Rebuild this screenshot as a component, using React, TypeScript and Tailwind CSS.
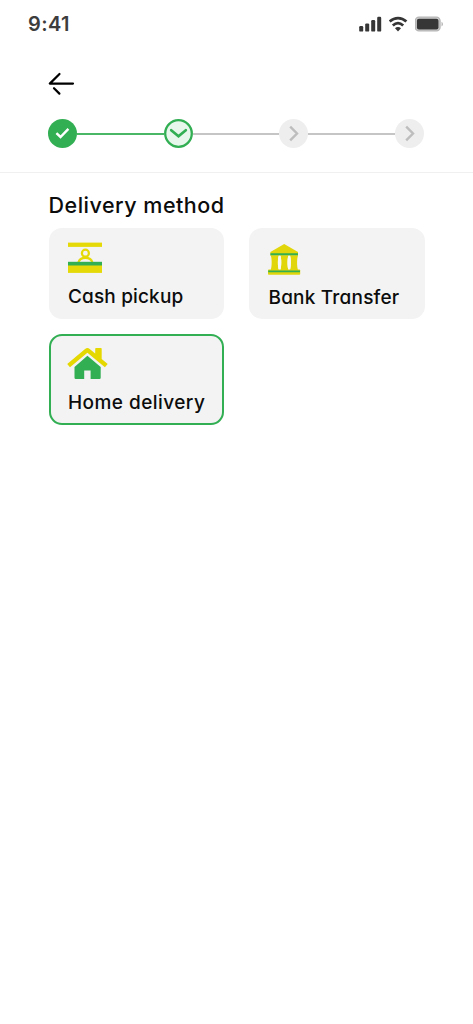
import React from 'react';
import clsx from 'clsx';

const StatusBar: React.FC = () => (
  <div className="flex h-12 items-center justify-between pl-7 pr-[29px]">
    <span className="font-['Inter',sans-serif] text-[20px] font-semibold leading-6 tracking-[0.4px] text-[#3d3d3d]">
      9:41
    </span>
    <div className="flex items-center gap-[7px]">
      <svg width="23" height="16" viewBox="0 0 23 16" fill="#363636">
        <rect x="0.2" y="10" width="4" height="5.6" rx="1.2" />
        <rect x="6.2" y="7.4" width="4" height="8.2" rx="1.2" />
        <rect x="12.2" y="4" width="4" height="11.6" rx="1.2" />
        <rect x="18.2" y="0.8" width="4" height="14.8" rx="1.2" />
      </svg>
      <svg width="19" height="16" viewBox="0 0 19 16" fill="none" stroke="#363636" strokeWidth="2.8">
        <path d="M0.6 5.5C5.6 0.9 12.4 0.9 17.4 5.5" />
        <path d="M3.8 9.5C7 6.6 11 6.6 14.2 9.5" />
        <path d="M6 12.3C7.6 10.7 10.4 10.7 12 12.3L9 15.4Z" fill="#363636" stroke="none" />
      </svg>
      <svg width="29" height="16" viewBox="0 0 29 16">
        <rect x="0.4" y="1.1" width="24.6" height="13.8" rx="3.6" fill="#d0d0d0" stroke="#b5b5b5" strokeWidth="1.4" />
        <rect x="1.9" y="2.8" width="21.6" height="10.6" rx="2" fill="#363636" />
        <path d="M26.5 5.8V10.6C28.5 9.5 28.5 6.9 26.5 5.8Z" fill="#b5b5b5" />
      </svg>
    </div>
  </div>
);

const CashIcon: React.FC = () => (
  <svg width="34" height="32" viewBox="0 0 34 32" className="block">
    <rect y="0.6" width="34" height="4.3" fill="#e5da08" />
    <g fill="none" stroke="#e5da08" strokeWidth="2.2">
      <circle cx="17.4" cy="11.2" r="3.5" />
      <path d="M10.4 20.6C12 14.4 22.8 14.4 24.4 20.6" />
    </g>
    <rect y="23" width="34" height="7.9" fill="#e5da08" />
    <rect y="19.8" width="34" height="3.7" fill="#32ae53" />
  </svg>
);

const BankIcon: React.FC = () => (
  <svg width="33" height="32" viewBox="0 0 33 32" className="block" fill="#e0d60a">
    <path d="M16.2 0.1L30 8.1V11.8H2.4V8.1Z" />
    <path d="M2.8 11.5H10.8C9.6 15 9.6 22 10.8 26H2.8C4 22 4 15 2.8 11.5Z" />
    <path d="M12.4 11.5H20.4C19.2 15 19.2 22 20.4 26H12.4C13.6 22 13.6 15 12.4 11.5Z" />
    <path d="M22 11.5H30C28.8 15 28.8 22 30 26H22C23.2 22 23.2 15 22 11.5Z" />
    <path
      d="M10.8 11.5C9.6 15 9.6 22 10.8 26H12.4C13.6 22 13.6 15 12.4 11.5ZM20.4 11.5C19.2 15 19.2 22 20.4 26H22C23.2 22 23.2 15 22 11.5Z"
      fill="#f8f8f5"
    />
    <rect x="0" y="25.4" width="32.2" height="5.4" rx="0.8" />
    <path d="M2.4 9.2H30V11.2H2.4ZM0.2 26.5H32V28.3H0.2Z" fill="#32ae53" />
  </svg>
);

const HomeIcon: React.FC = () => (
  <svg width="41" height="32" viewBox="0 0 41 32" className="block">
    <path
      d="M0.2 16L18.1 0.9Q20.4 -0.9 22.7 0.9L28.2 5.5V0.8Q28.2 0 29 0H33.9Q34.7 0 34.7 0.8V10.9L40.7 16L37.9 19.3L20.4 4.8L3 19.3Z"
      fill="#e5d800"
    />
    <path
      d="M20.4 7.8L33.7 18.9V29.8Q33.7 31 32.5 31H23.6V22.4H17.2V31H8.7Q7.5 31 7.5 29.8V18.9Z"
      fill="#32ae53"
    />
  </svg>
);

type StepState = 'done' | 'current' | 'upcoming';

const Step: React.FC<{ state: StepState }> = ({ state }) => (
  <svg width="29" height="29" viewBox="0 0 29 29" fill="none" className="shrink-0">
    {state === 'done' && (
      <>
        <circle cx="14.5" cy="14.5" r="14.5" fill="#32ae53" />
        <path d="M8.4 14.2L12.5 18L20.4 9.8" stroke="#fff" strokeWidth="2.4" />
      </>
    )}
    {state === 'current' && (
      <>
        <circle cx="14.5" cy="14.5" r="13.3" fill="#e8f7ec" stroke="#32ae53" strokeWidth="2.3" />
        <path d="M7.2 11.2L14.5 17.2L21.8 11.2" stroke="#32ae53" strokeWidth="2.7" strokeLinecap="round" />
      </>
    )}
    {state === 'upcoming' && (
      <>
        <circle cx="14.5" cy="14.5" r="14.5" fill="#eeeeee" />
        <path d="M11.2 7.7L18 14.5L11.2 21.3" stroke="#bdbdbd" strokeWidth="2.4" />
      </>
    )}
  </svg>
);

const Stepper: React.FC = () => (
  <div className="mt-[23px] flex items-center">
    <Step state="done" />
    <div className="h-0.5 flex-1 bg-[#49b766]" />
    <Step state="current" />
    <div className="h-0.5 flex-1 bg-[#c5c5c5]" />
    <Step state="upcoming" />
    <div className="h-0.5 flex-1 bg-[#c5c5c5]" />
    <Step state="upcoming" />
  </div>
);

interface Method {
  label: string;
  icon: React.ReactNode;
  selected?: boolean;
  iconClass: string;
  labelClass: string;
}

const methods: Method[] = [
  { label: 'Cash pickup', icon: <CashIcon />, iconClass: 'mt-3', labelClass: 'mt-[11px] tracking-[0.15px]' },
  { label: 'Bank Transfer', icon: <BankIcon />, iconClass: 'mt-[13.5px]', labelClass: 'mt-[10.5px] tracking-[0.2px]' },
  {
    label: 'Home delivery',
    icon: <HomeIcon />,
    selected: true,
    iconClass: '-ml-px mt-[11.5px]',
    labelClass: 'mt-[11.5px] tracking-[0.45px]',
  },
];

const MethodCard: React.FC<Method> = ({ label, icon, selected, iconClass, labelClass }) => (
  <button
    type="button"
    className={clsx(
      'flex h-[91px] flex-col items-start rounded-[13px] border-2 bg-[#f3f3f3] pl-[17px] text-left',
      selected ? 'border-[#32ae53]' : 'border-[#f3f3f3]',
    )}
  >
    <span className={iconClass}>{icon}</span>
    <span className={clsx('whitespace-nowrap pl-[0.5px] text-[19px] font-[450] leading-6', labelClass)}>{label}</span>
  </button>
);

const App: React.FC = () => {
  return (
    <main className="min-h-screen bg-white font-['Inter',sans-serif] text-[#0c0c0c] [font-feature-settings:'cv11']">
      <StatusBar />
      <header className="h-[125px] border-b border-[#f0f0f0] pl-12 pr-[49px] pt-6">
        <button type="button" aria-label="Back" className="block">
          <svg width="27" height="24" viewBox="0 0 27 24" fill="none" stroke="#000" strokeWidth="2.2" strokeLinecap="round">
            <path d="M11.5 2L1.8 11.6H25M6 16.2L11.4 21.6" strokeLinejoin="round" />
          </svg>
        </button>
        <Stepper />
      </header>
      <section className="px-[48.5px] pt-[18px]">
        <h1 className="whitespace-nowrap text-[21.5px] font-[450] leading-7 tracking-[0.5px]">Delivery method</h1>
        <div className="mt-[9px] grid grid-cols-2 gap-x-[25px] gap-y-[15px]">
          {methods.map((method) => (
            <MethodCard key={method.label} {...method} />
          ))}
        </div>
      </section>
    </main>
  );
};

export default App;
